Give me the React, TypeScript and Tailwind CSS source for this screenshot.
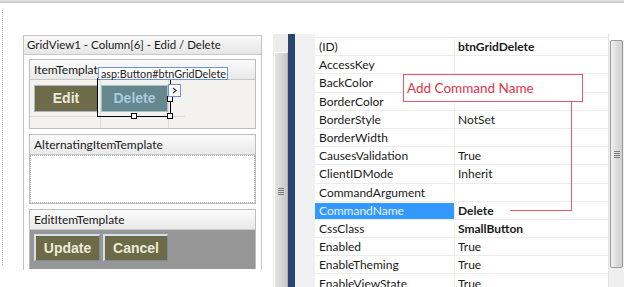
import React from "react";

const rows: { name: string; value: string; bold?: boolean; selected?: boolean }[] = [
  { name: "(ID)", value: "btnGridDelete", bold: true },
  { name: "AccessKey", value: "" },
  { name: "BackColor", value: "" },
  { name: "BorderColor", value: "" },
  { name: "BorderStyle", value: "NotSet" },
  { name: "BorderWidth", value: "" },
  { name: "CausesValidation", value: "True" },
  { name: "ClientIDMode", value: "Inherit" },
  { name: "CommandArgument", value: "" },
  { name: "CommandName", value: "Delete", bold: true, selected: true },
  { name: "CssClass", value: "SmallButton", bold: true },
  { name: "Enabled", value: "True" },
  { name: "EnableTheming", value: "True" },
  { name: "EnableViewState", value: "True" },
];

const btnFont = { fontFamily: '"Liberation Sans", Arial, sans-serif' };

function SectionHeader({ children }: { children: React.ReactNode }) {
  return (
    <div className="h-[20px] flex items-center pl-[4px] text-[12px] text-[#1a1a1a] bg-gradient-to-b from-[#fbfbfb] to-[#e9e9e9] border-b border-[#c8c8c8] whitespace-nowrap overflow-hidden">
      {children}
    </div>
  );
}

function Handle({ cls }: { cls: string }) {
  return <div className={`absolute w-[6px] h-[6px] bg-white border border-black ${cls}`} />;
}

function Grip() {
  return (
    <div className="flex flex-col gap-[1px]">
      <div className="w-[6px] h-[1px] bg-[#777]" />
      <div className="w-[6px] h-[1px] bg-[#777]" />
      <div className="w-[6px] h-[1px] bg-[#777]" />
      <div className="w-[6px] h-[1px] bg-[#777]" />
    </div>
  );
}

export default function App() {
  return (
    <div
      className="relative w-[624px] h-[287px] bg-white overflow-hidden"
      style={{ fontFamily: 'Lato, "Open Sans", sans-serif' }}
    >
      <div className="h-[3px] bg-[#dcdcdc] border-b border-[#c4c4c4]" />
      <div className="flex h-[284px]">
        {/* left dotted guide */}
        <div className="ml-[2px] mt-[7px] h-[255px] border-l border-dotted border-[#b8b8b8]" />

        {/* Grid view template editor */}
        <div className="ml-[20px] mt-[32px] w-[239px] h-[235px] border border-[#c4c4c4] border-b-0 flex flex-col">
          <div className="h-[19px] flex items-center pl-[3px] text-[11.5px] text-[#1a1a1a] bg-gradient-to-b from-[#fafafa] to-[#e6e6e6] border-b border-[#c8c8c8] whitespace-nowrap">
            GridView1 - Column[6] - Edid / Delete
          </div>
          <div className="flex flex-col gap-[5px] px-[5px] pt-[4px]">
            {/* ItemTemplate */}
            <div className="border border-[#bdbdbd] h-[70px] flex flex-col">
              <SectionHeader>ItemTemplat</SectionHeader>
              <div className="relative flex-1 bg-[#f4f2ee]">
                <div className="absolute left-[70px] top-0 bottom-0 border-l border-[#dedbd4]" />
                <div className="absolute left-[138px] top-0 bottom-0 border-l border-[#dedbd4]" />
                <div className="absolute left-0 right-[70px] top-[36px] border-t border-[#dedbd4]" />
                <div className="flex gap-[3px] pl-[4px] pt-[5px]">
                  <div className="w-[64px] h-[27px] bg-[#6d6b49] border border-[#a9b6c8] flex items-center justify-center text-[#ecebd9] text-[14px] font-bold" style={btnFont}>
                    Edit
                  </div>
                  <div className="w-[67px] h-[27px] bg-[#66878e] border border-[#a4c2cc] flex items-center justify-center text-[#a9cbe0] text-[14px] font-bold" style={btnFont}>
                    Delete
                  </div>
                </div>
              </div>
            </div>

            {/* AlternatingItemTemplate */}
            <div className="border border-[#bdbdbd] h-[70px] flex flex-col">
              <SectionHeader>AlternatingItemTemplate</SectionHeader>
              <div className="flex-1 bg-white border border-dotted border-[#b0b0b0]" />
            </div>

            {/* EditItemTemplate */}
            <div className="border border-[#bdbdbd] border-b-0 h-[60px] flex flex-col">
              <SectionHeader>EditItemTemplate</SectionHeader>
              <div className="flex-1 bg-[#979797] flex gap-[3px] pl-[4px] pt-[4px]">
                <div className="w-[66px] h-[27px] bg-[#6c6a47] border-t-2 border-l-2 border-[#d4e0ee] border-b border-r border-b-[#7d8aa0] border-r-[#7d8aa0] flex items-center justify-center text-[#ecebd9] text-[14px] font-bold" style={btnFont}>
                  Update
                </div>
                <div className="w-[65px] h-[27px] bg-[#6c6a47] border-t-2 border-l-2 border-[#d4e0ee] border-b border-r border-b-[#7d8aa0] border-r-[#7d8aa0] flex items-center justify-center text-[#ecebd9] text-[14px] font-bold" style={btnFont}>
                  Cancel
                </div>
              </div>
            </div>
          </div>
        </div>

        {/* splitter */}
        <div className="ml-[11px] mt-[31px] w-[15px] flex flex-col bg-[#ececec]">
          <div className="h-[18px]" />
          <div className="flex-1 ml-[1px] border-l border-t border-white bg-gradient-to-r from-[#e4e4e4] via-[#d6d6d6] to-[#c6c6c6] border-r border-r-[#b0b0b0] flex flex-col items-center pt-[135px]">
            <Grip />
          </div>
        </div>
        <div className="mt-[31px] w-[7px] bg-[#2d4570]" />

        {/* property grid */}
        <div className="mt-[31px] flex-1 flex bg-[#f2f2f2]">
          <div className="w-[20px] mt-[3px] bg-[#f0f0f0]" />
          <div className="flex-1 bg-white flex flex-col pt-[3px]">
            <div className="border-t border-[#ececec]" />
            {rows.map((r) => (
              <div key={r.name} className="h-[18.2px] shrink-0 flex border-b border-[#ececec] text-[12px] leading-[18px] pt-[1px]">
                <div
                  className={`w-[140px] flex items-center pl-[4px] border-r border-[#ececec] ${r.selected ? "bg-[#3399ff] text-[#e8f2ff]" : "text-[#1a1a1a]"}`}
                >
                  {r.name}
                </div>
                <div className={`flex-1 flex items-center pl-[3px] text-[#1a1a1a] ${r.bold ? "font-bold" : ""}`}>{r.value}</div>
              </div>
            ))}
          </div>
          {/* scrollbar */}
          <div className="w-[16px] flex flex-col bg-[#efefef] border-l border-[#e2e2e2]">
            <div className="h-[6px] bg-white" />
            <div className="h-[228px] mx-[1px] rounded-[2px] border border-[#9a9a9a] bg-gradient-to-r from-[#f2f2f2] via-[#dedede] to-[#cfcfcf] flex items-center justify-center">
              <Grip />
            </div>
          </div>
        </div>
      </div>

      {/* selection overlay on the Delete button */}
      <div className="absolute left-[97px] top-[78px] w-[74px] h-[39px] border border-black" />
      <Handle cls="left-[131px] top-[113px]" />
      <Handle cls="left-[167px] top-[113px]" />
      <Handle cls="left-[167px] top-[96px]" />
      <div className="absolute left-[98px] top-[67px] w-[130px] h-[13px] px-[2px] bg-white border border-[#7193d6] text-[10.8px] leading-[11px] text-[#222] whitespace-nowrap">
        asp:Button#btnGridDelete
      </div>
      <div className="absolute left-[168px] top-[84px] w-[13px] h-[13px] bg-white border border-[#6d8fd0] flex items-center justify-center">
        <svg width="7" height="7" viewBox="0 0 7 7">
          <path d="M2 1 L5 3.5 L2 6" fill="none" stroke="#333" strokeWidth="1.2" />
        </svg>
      </div>

      {/* annotation */}
      <div className="absolute left-[403px] top-[74px] w-[180px] h-[28px] bg-white border border-[#e25a6a] flex items-center pl-[3px] text-[13.5px] text-[#e0364a]">
        Add Command Name
      </div>
      <div className="absolute left-[571px] top-[101px] h-[110px] border-l border-[#e25a6a]" />
      <div className="absolute left-[510px] top-[210px] w-[62px] border-t border-[#e25a6a]" />
    </div>
  );
}
